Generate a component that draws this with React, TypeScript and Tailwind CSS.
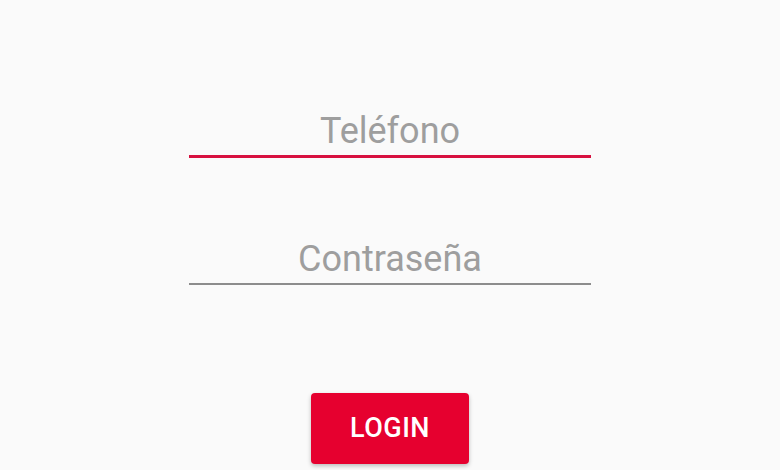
export default function App() {
  return (
    <div className="min-h-screen w-full bg-[#fafafa] flex flex-col items-center pt-[110px] font-['Roboto','Liberation_Sans',sans-serif]">
      {/* PHONE */}
      <input
        type="tel"
        placeholder="Teléfono"
        className="w-[402px] h-[48px] pb-[3px] bg-transparent text-center text-[36px] leading-[42px] text-[#616161] placeholder:text-[#9e9e9e] border-b-[3px] border-[#d7103f] outline-none"
      />

      {/* PASSWORD */}
      <input
        type="password"
        placeholder="Contraseña"
        className="mt-[80px] w-[402px] h-[47px] pb-[3px] bg-transparent text-center text-[36px] leading-[42px] text-[#616161] placeholder:text-[#9e9e9e] border-b-2 border-[#8c8c8c] outline-none"
      />

      <button className="mt-[108px] w-[158px] h-[71px] rounded-[4px] bg-[#e6002f] text-white text-[27px] font-medium tracking-[0.5px] shadow-[0_2px_4px_rgba(0,0,0,0.25)]">
        LOGIN
      </button>
    </div>
  );
}
